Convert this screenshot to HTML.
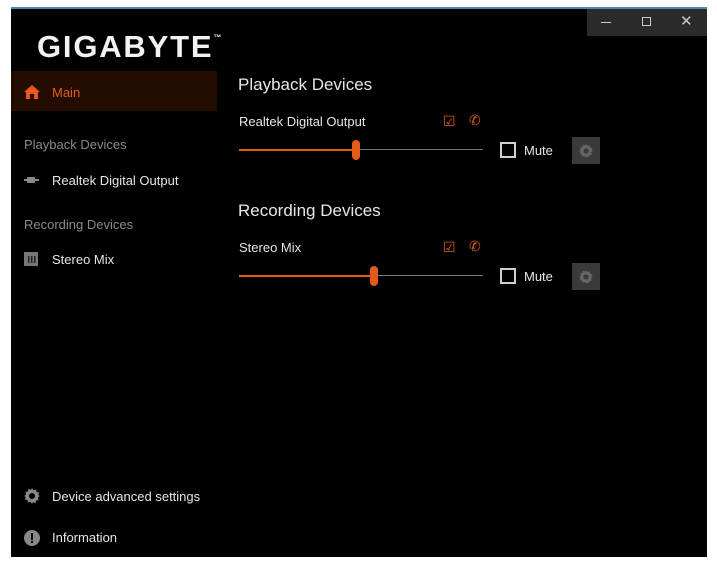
<!DOCTYPE html>
<html><head><meta charset="utf-8"><style>
*{margin:0;padding:0;box-sizing:border-box}
body{width:717px;height:563px;background:#fff;position:relative;overflow:hidden;font-family:"Liberation Sans",sans-serif}
.win{position:absolute;left:11px;top:7px;width:696px;height:550px;background:#000;border-top:2px solid #4a8ab0}
.a{position:absolute;white-space:nowrap}
.logo{left:26px;top:20px;color:#f2f2f2;font-weight:bold;font-size:31px;letter-spacing:1.8px}
.tb{position:absolute;left:576px;top:0;width:120px;height:27px;background:#2b2b2b}
.side{color:#8a8a8a;font-size:13px}
.item{color:#e6e6e6;font-size:13px}
.h{color:#e6e6e6;font-size:17px}
.dev{color:#e6e6e6;font-size:13px}
.mute{color:#e6e6e6;font-size:13px}
.cb{position:absolute;width:16px;height:16px;border:2px solid #d0d0d0}
.gear{position:absolute;width:28px;height:27px;background:#3a3a3a}
</style></head><body>
<div class="win">
 <div class="a logo">GIGABYTE<span style="font-size:8px;vertical-align:top;position:relative;top:4px;letter-spacing:0">™</span></div>
 <div class="tb">
  <div class="a" style="left:14px;top:13px;width:10px;height:1px;background:#ccc"></div>
  <div class="a" style="left:55px;top:8px;width:9px;height:9px;border:1px solid #ccc"></div>
  <div class="a" style="left:93px;top:3px;color:#ccc;font-size:15px">✕</div>
 </div>
 <div class="a" style="left:0;top:62px;width:206px;height:40px;background:#250c03"></div>
 <svg class="a" style="left:13px;top:76px" width="16" height="14" viewBox="0 0 16 14"><path d="M8 0L0 7h2v7h4V9h4v5h4V7h2z" fill="#e35b1a"/></svg>
 <div class="a" style="left:41px;top:76px;color:#e35b1a;font-size:13px">Main</div>
 <div class="a side" style="left:13px;top:128px">Playback Devices</div>
 <svg class="a" style="left:13px;top:167px" width="16" height="8"><rect x="3" y="1" width="8" height="6" rx="1" fill="#888"/><rect x="0" y="3" width="3" height="2" fill="#888"/><rect x="11" y="3" width="4" height="2" fill="#888"/></svg>
 <div class="a item" style="left:41px;top:164px">Realtek Digital Output</div>
 <div class="a side" style="left:13px;top:208px">Recording Devices</div>
 <svg class="a" style="left:13px;top:243px" width="14" height="14"><rect width="14" height="14" fill="#777"/><rect x="4" y="4" width="1.5" height="7" fill="#222"/><rect x="7" y="4" width="1.5" height="7" fill="#222"/><rect x="10" y="4" width="1.5" height="7" fill="#222"/></svg>
 <div class="a item" style="left:41px;top:243px">Stereo Mix</div>
 <svg class="a" style="left:13px;top:479px" width="16" height="16" viewBox="0 0 16 16"><path d="M8 0l1.5 2.2 2.6-.8.4 2.6 2.6.5-.8 2.6L16 8l-2.2 1.5.8 2.6-2.6.4-.5 2.6-2.6-.8L8 16l-1.5-2.2-2.6.8-.4-2.6-2.6-.5.8-2.6L0 8l2.2-1.5-.8-2.6 2.6-.4.5-2.6 2.6.8z" fill="#888"/><circle cx="8" cy="8" r="3" fill="#000"/></svg>
 <div class="a item" style="left:41px;top:480px">Device advanced settings</div>
 <svg class="a" style="left:13px;top:521px" width="16" height="16"><circle cx="8" cy="8" r="8" fill="#888"/><rect x="7" y="3" width="2" height="7" fill="#000"/><rect x="7" y="11" width="2" height="2" fill="#000"/></svg>
 <div class="a item" style="left:41px;top:521px">Information</div>

 <div class="a h" style="left:227px;top:66px">Playback Devices</div>
 <div class="a dev" style="left:228px;top:105px">Realtek Digital Output</div>
 <div class="a" style="left:432px;top:104px;color:#e35b1a;font-size:14px">☑</div>
 <div class="a" style="left:458px;top:103px;color:#e35b1a;font-size:14px">✆</div>
 <div class="a" style="left:228px;top:140px;width:117px;height:2px;background:#e35b1a"></div>
 <div class="a" style="left:345px;top:140px;width:127px;height:1px;background:#777"></div>
 <div class="a" style="left:341px;top:131px;width:8px;height:20px;border-radius:4px;background:#e35b1a"></div>
 <div class="cb" style="left:489px;top:133px"></div>
 <div class="a mute" style="left:513px;top:134px">Mute</div>
 <div class="gear" style="left:561px;top:128px"><svg style="position:absolute;left:7px;top:7px" width="14" height="14" viewBox="0 0 16 16"><path d="M8 0l1.5 2.2 2.6-.8.4 2.6 2.6.5-.8 2.6L16 8l-2.2 1.5.8 2.6-2.6.4-.5 2.6-2.6-.8L8 16l-1.5-2.2-2.6.8-.4-2.6-2.6-.5.8-2.6L0 8l2.2-1.5-.8-2.6 2.6-.4.5-2.6 2.6.8z" fill="#666"/><circle cx="8" cy="8" r="3" fill="#3a3a3a"/></svg></div>

 <div class="a h" style="left:227px;top:192px">Recording Devices</div>
 <div class="a dev" style="left:228px;top:231px">Stereo Mix</div>
 <div class="a" style="left:432px;top:230px;color:#e35b1a;font-size:14px">☑</div>
 <div class="a" style="left:458px;top:229px;color:#e35b1a;font-size:14px">✆</div>
 <div class="a" style="left:228px;top:266px;width:135px;height:2px;background:#e35b1a"></div>
 <div class="a" style="left:363px;top:266px;width:109px;height:1px;background:#777"></div>
 <div class="a" style="left:359px;top:257px;width:8px;height:20px;border-radius:4px;background:#e35b1a"></div>
 <div class="cb" style="left:489px;top:259px"></div>
 <div class="a mute" style="left:513px;top:260px">Mute</div>
 <div class="gear" style="left:561px;top:254px"><svg style="position:absolute;left:7px;top:7px" width="14" height="14" viewBox="0 0 16 16"><path d="M8 0l1.5 2.2 2.6-.8.4 2.6 2.6.5-.8 2.6L16 8l-2.2 1.5.8 2.6-2.6.4-.5 2.6-2.6-.8L8 16l-1.5-2.2-2.6.8-.4-2.6-2.6-.5.8-2.6L0 8l2.2-1.5-.8-2.6 2.6-.4.5-2.6 2.6.8z" fill="#666"/><circle cx="8" cy="8" r="3" fill="#3a3a3a"/></svg></div>
</div>
</body></html>
